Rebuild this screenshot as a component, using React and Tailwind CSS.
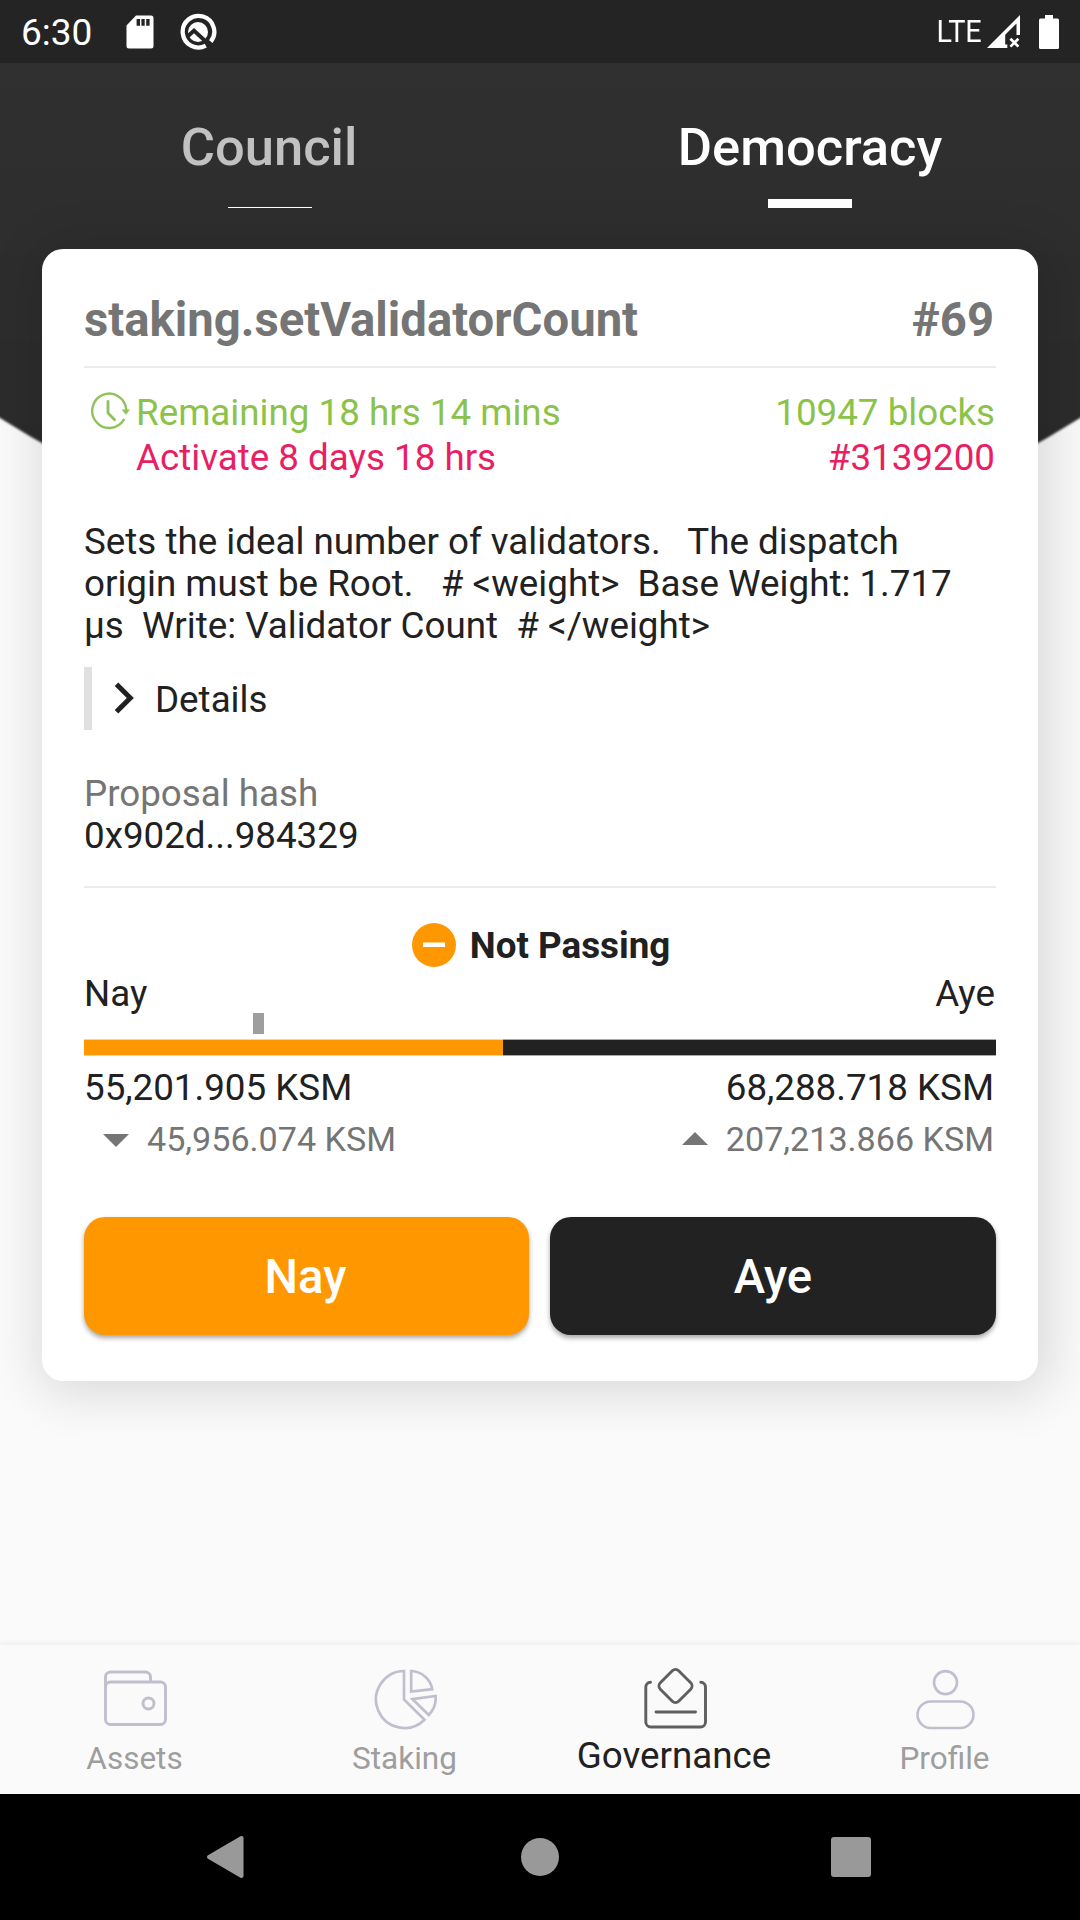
import React from "react";

function StatusBar() {
  return (
    <div className="flex h-[63px] items-center bg-[#242424] text-white">
      <div className="ml-[21px] w-[71px] pt-[3px] text-[37px] leading-[66px]">6:30</div>
      <svg className="ml-[34px] shrink-0" width="28" height="34" viewBox="0 0 28 34">
        <path
          fillRule="evenodd"
          fill="#fff"
          d="M10 .5H25a2.5 2.5 0 0 1 2.5 2.5V31a2.5 2.5 0 0 1-2.5 2.5H3A2.500 2.500 0 0 1 .5 31V10.500ZM10.600 4V10.800H14V4ZM15.400 4V10.800H18.700V4ZM20.200 4V10.800H23.600V4Z"
        />
      </svg>
      <svg className="ml-[25px] shrink-0" width="38" height="38" viewBox="0 0 38 38">
        <path d="M26.800 32.700A15.800 15.800 0 1 1 31.800 28.600" fill="none" stroke="#fff" strokeWidth="4.300" />
        <circle cx="19" cy="19" r="10" fill="#fff" />
        <path d="M8.500 23.500L15 17.600L30 31.500" fill="none" stroke="#242424" strokeWidth="4" />
      </svg>
      <div className="ml-auto flex w-[42px] justify-center">
        <span className="mr-[2px] inline-block scale-x-[.9] pb-[1px] text-[32px] leading-[60px]">LTE</span>
      </div>
      <svg className="ml-[6px] shrink-0" width="34" height="34" viewBox="0 0 34 34">
        <path d="M0 33L33 0V20H29.500V8.600L18.200 19.800V29.500H20.300V33Z" fill="#fff" />
        <path d="M23.400 23.800L31.400 31.600M31.400 23.800L23.400 31.600" stroke="#fff" strokeWidth="2.700" fill="none" />
      </svg>
      <svg className="mr-[21px] ml-[18px] shrink-0" width="20" height="34" viewBox="0 0 20 34">
        <path d="M6 0H14V3.500H18.500A1.500 1.500 0 0 1 20 5V32.500A1.500 1.500 0 0 1 18.500 34H1.500A1.500 1.500 0 0 1 0 32.500V5A1.500 1.500 0 0 1 1.500 3.500H6Z" fill="#fff" />
      </svg>
    </div>
  );
}

function Tab({ label, active }) {
  return (
    <div className="flex flex-1 flex-col items-center pt-[54px]">
      <div className={active ? "text-[52.5px] leading-[60px] font-medium text-white" : "pr-[2px] text-[52.5px] leading-[60px] font-medium text-[#c1c1c1]"}>
        {label}
      </div>
      <div className="flex h-[31px] items-end">
        <div className={active ? "h-[9px] w-[84px] bg-white" : "h-px w-[84px] bg-white"} />
      </div>
    </div>
  );
}

function ClockIcon() {
  return (
    <svg className="mt-[2px] ml-[7px] shrink-0" width="42" height="40" viewBox="0 0 42 40" fill="none" stroke="#8fc15c" strokeWidth="2.400">
      <path d="M32.800 27.700A17 17.200 0 1 1 35.200 17.500" strokeLinecap="round" />
      <path d="M17 9.500V21L23.600 27.800" strokeWidth="2.800" strokeLinecap="round" />
      <path d="M30.500 17.500L39 17.500L35 22.700Z" fill="#8fc15c" stroke="none" />
    </svg>
  );
}

function ProposalCard() {
  return (
    <div className="mx-[42px] rounded-[21px] bg-white px-[42px] pt-[43px] pb-[46px] shadow-[5px_5px_49px_10px_rgba(0,0,0,0.12)]">
      <div className="flex justify-between pr-[2px] text-[47.25px] leading-[56px] font-bold text-[#757575]">
        <span>staking.setValidatorCount</span>
        <span>#69</span>
      </div>
      <div className="mt-[18px] h-[2px] bg-[#ebebeb]" />
      <div className="mt-[22px] flex pr-px leading-[45px]">
        <ClockIcon />
        <div className="ml-[3px] flex-1">
          <div className="text-[#8bc34a]">Remaining 18 hrs 14 mins</div>
          <div className="text-[#e91e63]">Activate 8 days 18 hrs</div>
        </div>
        <div className="text-right">
          <div className="text-[#8bc34a]">10947 blocks</div>
          <div className="text-[#e91e63]">#3139200</div>
        </div>
      </div>
      <p className="mt-[41px] whitespace-pre">
        {"Sets the ideal number of validators.   The dispatch\norigin must be Root.   # <weight>  Base Weight: 1.717\nµs  Write: Validator Count  # </weight>"}
      </p>
      <div className="mt-[20px] flex h-[63px] items-center border-l-8 border-[#e0e0e0]">
        <svg className="mb-px ml-[22px]" width="20" height="32" viewBox="0 0 20 32">
          <path d="M2.500 2.200L16.300 15.900L2.500 29.700" fill="none" stroke="#212121" strokeWidth="5" />
        </svg>
        <span className="ml-[21px] pt-[2px]">Details</span>
      </div>
      <div className="mt-[43px] text-[#757575]">Proposal hash</div>
      <div>0x902d...984329</div>
      <div className="mt-[29px] h-[2px] bg-[#ebebeb]" />

      <div className="mt-[31px] flex h-[52px] items-center justify-center pl-[2px] font-bold">
        <svg className="mr-[14px]" width="44" height="44" viewBox="0 0 44 44">
          <circle cx="22" cy="22" r="22" fill="#ff9800" />
          <rect x="11" y="19.500" width="22" height="4.500" fill="#fff" />
        </svg>
        <span className="pt-[2px]">Not Passing</span>
      </div>
      <div className="mt-[2px] flex h-[40px] justify-between pr-px">
        <span>Nay</span>
        <span>Aye</span>
      </div>
      <div className="ml-[169px] h-[21px] w-[11px] bg-[#9e9e9e]" />
      <div className="mt-[5px] flex h-[17px]">
        <div className="w-[419px] border-y border-[#ffd391] bg-[#ff9800]" />
        <div className="flex-1 border-y border-[#a9a9a9] bg-[#222222]" />
      </div>
      <div className="mt-[11px] flex justify-between pr-[2px]">
        <span>55,201.905 KSM</span>
        <span>68,288.718 KSM</span>
      </div>
      <div className="mt-[10px] flex justify-between pr-[2px] text-[34.125px] leading-[40px] text-[#757575]">
        <div className="flex items-center">
          <svg className="mt-[3px] mr-[18px] ml-[19px]" width="26" height="13" viewBox="0 0 26 13">
            <path d="M0 0H26L13 13Z" fill="#757575" />
          </svg>
          <span>45,956.074 KSM</span>
        </div>
        <div className="flex items-center">
          <svg className="mr-[18px] mb-[2px]" width="26" height="13" viewBox="0 0 26 13">
            <path d="M0 13H26L13 0Z" fill="#757575" />
          </svg>
          <span>207,213.866 KSM</span>
        </div>
      </div>

      <div className="mt-[58px] flex gap-[21px] text-[47.25px] font-medium text-white">
        <button className="h-[118px] w-[445px] rounded-[21px] bg-[#ff9800] pt-[2px] pr-[2px] shadow-[0_3px_5px_rgba(0,0,0,0.35)]">Nay</button>
        <button className="h-[118px] flex-1 rounded-[21px] bg-[#222222] pt-[2px] shadow-[0_3px_5px_rgba(0,0,0,0.35)]">Aye</button>
      </div>
    </div>
  );
}

const icons = {
  Assets: (
    <>
      <rect x="1.500" y="15" width="60" height="42.500" rx="5" />
      <path d="M1.500 20V9.500A5 5 0 0 1 6.500 5H41.500A5 5 0 0 1 46.500 10V15" />
      <circle cx="44.500" cy="36.500" r="5.500" />
    </>
  ),
  Staking: (
    <>
      <path d="M30 4A28.500 28.500 0 1 0 50.500 52.800L30 32.500Z" strokeWidth="2.700" />
      <path d="M37.200 4C48 4.500 56.800 12.500 58.200 22.200L37.200 24.500Z" strokeWidth="2.700" />
      <path d="M38.500 32.200L61.600 29C62.200 36 60 42.500 54.800 48Z" strokeWidth="2.700" />
    </>
  ),
  Governance: (
    <>
      <path d="M6.500 15.300A5 5 0 0 0 1.800 20.300V55A5 5 0 0 0 6.800 60H56.500A5 5 0 0 0 61.500 55V20.300A5 5 0 0 0 56.800 15.300" strokeLinecap="round" />
      <rect x="18.500" y="6" width="26" height="26" rx="4.500" transform="rotate(45 31.500 19)" />
      <path d="M12 45H51.500" strokeLinecap="round" />
    </>
  ),
  Profile: (
    <>
      <circle cx="31.500" cy="15.600" r="11.500" strokeWidth="2.600" />
      <rect x="3.500" y="34.500" width="56" height="26.500" rx="13.250" strokeWidth="2.600" />
    </>
  ),
};

function NavItem({ name, active }) {
  return (
    <div className="flex flex-1 flex-col items-center pt-[22px]">
      <svg width="63" height="63" viewBox="0 0 63 63" fill="none" stroke={active ? "#5f5f5f" : "#c1bfce"} strokeWidth="2.900">
        {icons[name]}
      </svg>
      <div className={active ? "mt-[5px] pr-[2px] leading-[42px] text-[#212121]" : "mt-[10px] pr-px text-[31.5px] leading-[38px] text-[#9e9e9e]"}>
        {name}
      </div>
    </div>
  );
}

function SystemNav() {
  return (
    <div className="flex h-[126px] items-center justify-between bg-black pr-[209px] pl-[206px]">
      <svg width="38" height="44" viewBox="0 0 38 44">
        <path d="M3 22L35.500 3V41Z" fill="#999" stroke="#999" strokeWidth="4" strokeLinejoin="round" />
      </svg>
      <div className="ml-[5px] size-[38px] rounded-full bg-[#999]" />
      <div className="size-[40px] rounded-[3px] bg-[#999]" />
    </div>
  );
}

export default function App() {
  return (
    <div className="relative isolate flex h-[1920px] w-[1080px] flex-col overflow-hidden bg-[#fafafa] font-[Roboto,sans-serif] text-[36.75px] leading-[42px] text-[#212121]">
      <svg className="absolute top-0 -left-5 -z-10 blur-[1px]" width="1120" height="620" viewBox="-20 0 1120 620">
        <defs>
          <linearGradient id="header" x1="0" y1="0" x2="0" y2="1">
            <stop offset="0" stopColor="#313131" />
            <stop offset="1" stopColor="#2a2a2a" />
          </linearGradient>
        </defs>
        <path d="M-20 -20H1100V405L1080 418A1009 1009 0 0 1 0 418L-20 405Z" fill="url(#header)" />
      </svg>
      <StatusBar />
      <div className="flex h-[186px]">
        <Tab label="Council" />
        <Tab label="Democracy" active />
      </div>
      <main className="flex-1">
        <ProposalCard />
      </main>
      <nav className="flex h-[149px] bg-[#fafafa] shadow-[0_-2px_6px_rgba(0,0,0,0.05)]">
        <NavItem name="Assets" />
        <NavItem name="Staking" />
        <NavItem name="Governance" active />
        <NavItem name="Profile" />
      </nav>
      <SystemNav />
    </div>
  );
}
